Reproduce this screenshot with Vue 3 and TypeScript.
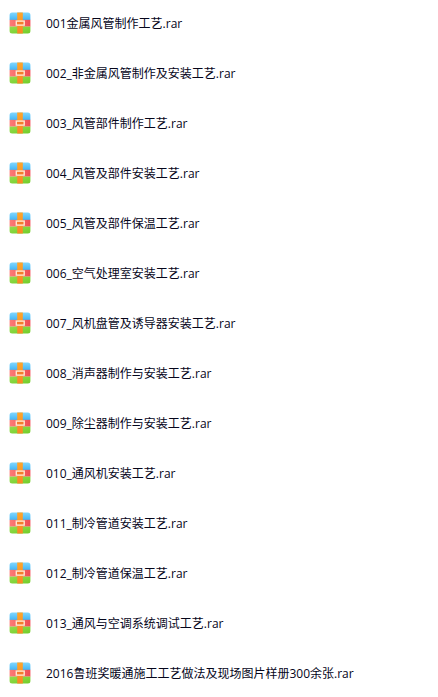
<script setup lang="ts">
const files: string[] = [
  '001金属风管制作工艺.rar',
  '002_非金属风管制作及安装工艺.rar',
  '003_风管部件制作工艺.rar',
  '004_风管及部件安装工艺.rar',
  '005_风管及部件保温工艺.rar',
  '006_空气处理室安装工艺.rar',
  '007_风机盘管及诱导器安装工艺.rar',
  '008_消声器制作与安装工艺.rar',
  '009_除尘器制作与安装工艺.rar',
  '010_通风机安装工艺.rar',
  '011_制冷管道安装工艺.rar',
  '012_制冷管道保温工艺.rar',
  '013_通风与空调系统调试工艺.rar',
  '2016鲁班奖暖通施工工艺做法及现场图片样册300余张.rar',
]
</script>

<template>
  <svg class="defs" aria-hidden="true">
    <defs>
      <linearGradient id="blue" x1="0" y1="0" x2="0" y2="1">
        <stop offset="0" stop-color="#86d8fd" />
        <stop offset="1" stop-color="#42b6f4" />
      </linearGradient>
      <linearGradient id="red" gradientUnits="userSpaceOnUse" x1="0" y1="0" x2="22" y2="0">
        <stop offset="0" stop-color="#fb7d78" />
        <stop offset="1" stop-color="#ef4a52" />
      </linearGradient>
      <linearGradient id="green" x1="0" y1="0" x2="1" y2="1">
        <stop offset="0" stop-color="#93dc4c" />
        <stop offset="1" stop-color="#6fcb26" />
      </linearGradient>
      <linearGradient id="orange" x1="0" y1="0" x2="0" y2="1">
        <stop offset="0" stop-color="#ffa629" />
        <stop offset="1" stop-color="#fb8423" />
      </linearGradient>
      <clipPath id="tile">
        <rect x="0.6" y="0.6" width="20.8" height="20.8" rx="2.5" />
      </clipPath>
    </defs>
  </svg>
  <ul class="files">
    <li v-for="name in files" :key="name" class="file">
      <svg class="icon" viewBox="0 0 22 22" aria-hidden="true">
        <g clip-path="url(#tile)">
          <rect width="22" height="8" fill="url(#blue)" />
          <rect y="7.8" width="22" height="6.9" fill="url(#red)" />
          <rect y="14.6" width="22" height="8" fill="url(#green)" />
          <rect x="8.2" width="5.6" height="22" fill="url(#orange)" />
        </g>
        <rect x="7.3" y="9.1" width="7.9" height="4" fill="#f47a2c" stroke="#ffe6cf" stroke-width="1.4" />
      </svg>
      <span class="name">{{ name }}</span>
    </li>
  </ul>
</template>

<style>
body {
  background: #fff;
}
</style>

<style scoped>
.defs {
  position: absolute;
  width: 0;
  height: 0;
}

.files {
  display: flex;
  flex-direction: column;
  gap: 4px;
  margin: 0;
  padding: 0;
  list-style: none;
}

.file {
  display: flex;
  align-items: center;
  gap: 15px;
  height: 46px;
  padding: 0 9px;
}

.icon {
  flex: none;
  width: 22px;
  height: 22px;
}

.name {
  padding-top: 2px;
  color: #05051a;
  font-family: "Open Sans", "Noto Sans CJK SC", sans-serif;
  font-size: 12px;
  line-height: 18px;
  white-space: nowrap;
}
</style>
